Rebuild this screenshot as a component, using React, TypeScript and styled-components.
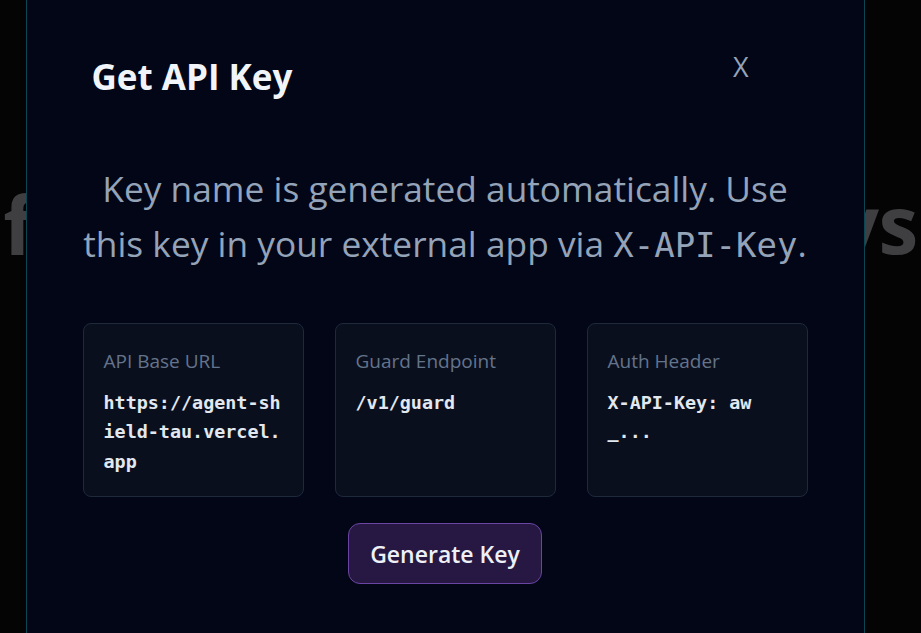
import React from "react";
import styled, { createGlobalStyle } from "styled-components";

const GlobalStyle = createGlobalStyle`
  html, body {
    margin: 0;
    padding: 0;
    height: 100%;
    background: #050505;
    overflow: hidden;
  }
  body {
    font-family: "Open Sans", "Noto Sans", sans-serif;
  }
`;

const Page = styled.div`
  height: 633px;
  padding-top: 168px;
  box-sizing: border-box;
`;

const BackdropHeading = styled.h1`
  margin: 0;
  white-space: nowrap;
  font-size: 80px;
  line-height: normal;
  font-weight: 700;
  color: #4a4a4e;
  text-align: center;
  letter-spacing: -0.5px;
`;

const Overlay = styled.div`
  position: fixed;
  inset: 0;
  display: flex;
  justify-content: center;
  align-items: flex-start;
  background: rgba(0, 0, 0, 0.15);
`;

const Modal = styled.div`
  width: 839px;
  margin-top: -20px;
  margin-left: -31px;
  min-height: 700px;
  box-sizing: border-box;
  padding: 75px 56px 40px;
  background: #020617;
  border: 1px solid #0c4654;
  border-radius: 16px;
  display: flex;
  flex-direction: column;
`;

const Header = styled.div`
  display: flex;
  align-items: flex-start;
  justify-content: space-between;
  padding: 0 59px 0 9px;
`;

const Title = styled.h2`
  margin: 0;
  font-size: 35px;
  font-weight: 700;
  color: #f1f5f9;
  line-height: 1.2;
`;

const CloseButton = styled.button`
  background: none;
  border: none;
  padding: 0;
  margin-top: -5px;
  font-family: "Open Sans", sans-serif;
  font-size: 27px;
  color: #94a3b8;
  cursor: pointer;
  line-height: 1.2;
`;

const Description = styled.p`
  margin: 63px 0 0;
  text-align: center;
  font-size: 35.3px;
  line-height: 55px;
  color: #94a3b8;
`;

const Code = styled.code`
  font-family: "DejaVu Sans Mono", "Liberation Mono", monospace;
  font-size: 34px;
`;

const CardGrid = styled.div`
  display: grid;
  grid-template-columns: repeat(3, 1fr);
  gap: 31px;
  margin-top: 50px;
`;

const Card = styled.div`
  background: #0a0f1e;
  border: 1px solid #1e293b;
  border-radius: 8px;
  padding: 24px 20px 18px;
  min-height: 174px;
  box-sizing: border-box;
`;

const Label = styled.div`
  font-size: 19px;
  color: #64748b;
  line-height: 1.4;
`;

const Value = styled.div`
  margin-top: 13px;
  font-family: "DejaVu Sans Mono", "Liberation Mono", monospace;
  font-weight: 700;
  font-size: 18.4px;
  line-height: 29.5px;
  color: #e2e8f0;
  word-break: break-all;
`;

const Actions = styled.div`
  display: flex;
  justify-content: center;
  margin-top: 26px;
`;

const PrimaryButton = styled.button`
  height: 61px;
  padding: 0 21px;
  border-radius: 12px;
  background: #261843;
  border: 1px solid #6a45a3;
  color: #eef0f6;
  font-family: "Open Sans", sans-serif;
  font-size: 23px;
  font-weight: 600;
  cursor: pointer;
`;

const infoCards = [
  { label: "API Base URL", value: "https://agent-shield-tau.vercel.app" },
  { label: "Guard Endpoint", value: "/v1/guard" },
  { label: "Auth Header", value: "X-API-Key: aw_..." },
];

export default function App() {
  return (
    <>
      <GlobalStyle />
      <Page>
        <BackdropHeading>for your agent API keys</BackdropHeading>
      </Page>
      <Overlay>
        <Modal>
          <Header>
            <Title>Get API Key</Title>
            <CloseButton aria-label="Close">X</CloseButton>
          </Header>
          <Description>
            Key name is generated automatically. Use this key in your external app via{" "}
            <Code>X-API-Key</Code>.
          </Description>
          <CardGrid>
            {infoCards.map((c) => (
              <Card key={c.label}>
                <Label>{c.label}</Label>
                <Value>{c.value}</Value>
              </Card>
            ))}
          </CardGrid>
          <Actions>
            <PrimaryButton>Generate Key</PrimaryButton>
          </Actions>
        </Modal>
      </Overlay>
    </>
  );
}
